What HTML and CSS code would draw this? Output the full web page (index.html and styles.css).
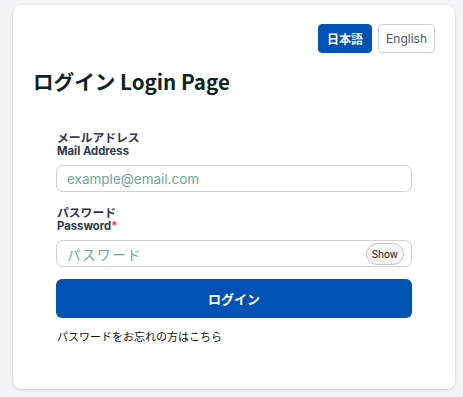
FILE: index.html
```html
<!DOCTYPE html>
<html lang="ja">
<head>
<meta charset="utf-8">
<link rel="stylesheet" href="styles.css">
</head>
<body>
<div class="card">
  <div class="lang">
    <button class="lang-btn active">日本語</button>
    <button class="lang-btn">English</button>
  </div>
  <h1 class="title">ログイン Login Page</h1>
  <form class="form">
    <div class="field">
      <label class="label"><span class="ja">メールアドレス</span><span class="en">Mail Address</span></label>
      <div class="input"><span class="ph">example@email.com</span></div>
    </div>
    <div class="field">
      <label class="label"><span class="ja">パスワード</span><span class="en">Password<span class="req">*</span></span></label>
      <div class="input"><span class="ph ph-pw">パスワード</span><span class="show">Show</span></div>
    </div>
    <button type="button" class="submit">ログイン</button>
    <div class="forgot">パスワードをお忘れの方はこちら</div>
  </form>
</div>
</body>
</html>
```
FILE: styles.css
```css
html, body { margin: 0; padding: 0; }
body {
  background: #f3f4f6;
  font-family: "Inter", "Noto Sans CJK JP", sans-serif;
  padding: 5px 8px 8px 13px;
  box-sizing: border-box;
  height: 397px;
}
.card {
  width: 442px;
  height: 384px;
  box-sizing: border-box;
  background: #fff;
  border-radius: 8px;
  box-shadow: 0 1px 3px rgba(0,0,0,0.12), 0 0 0 1px rgba(0,0,0,0.03);
  padding: 19px 20px 0 20px;
}
.lang {
  display: flex;
  justify-content: flex-end;
  gap: 6px;
}
.lang-btn {
  height: 29px;
  padding: 0 7px;
  border-radius: 4px;
  font-family: "Inter", "Noto Sans CJK JP", sans-serif;
  font-size: 12px;
  border: 1px solid #cbd2dc;
  background: #fff;
  color: #4a5568;
}
.lang-btn.active {
  background: #0052b4;
  border-color: #0052b4;
  color: #fff;
  font-weight: 600;
  padding: 0 8px;
}
.title {
  margin: 13px 0 0 0;
  font-family: "Noto Sans CJK JP", sans-serif;
  font-size: 20.6px;
  font-weight: 700;
  color: #0d2327;
  line-height: 30px;
}
.form {
  margin: 33px 23px 0 23px;
  display: flex;
  flex-direction: column;
}
.field { display: flex; flex-direction: column; margin-bottom: 12px; }
.label {
  display: flex;
  flex-direction: column;
  font-size: 11.3px;
  font-weight: 700;
  color: #2d3748;
  line-height: 15px;
  margin-bottom: 6px;
  padding-left: 1px;
}
.label .ja { font-family: "Noto Sans CJK JP", sans-serif; font-size: 11.8px; }
.req { color: #e53e3e; }
.input {
  height: 27px;
  box-sizing: border-box;
  border: 1px solid #cbd0da;
  border-radius: 7px;
  display: flex;
  align-items: center;
  justify-content: space-between;
  padding: 0 7px 0 10px;
}
.ph {
  font-family: "Inter", "Noto Sans CJK JP", sans-serif;
  font-size: 13.5px;
  color: #6fa59a;
}
.ph-pw {
  font-family: "Noto Sans CJK JP", sans-serif;
  letter-spacing: 1.5px;
  font-size: 13.5px;
}
.show {
  font-size: 10px;
  color: #111;
  background: #f4f4f4;
  border: 1px solid #c9c9c9;
  border-radius: 11px;
  padding: 0 5px;
  height: 22px;
  box-sizing: border-box;
  display: flex;
  align-items: center;
}
.submit {
  margin-top: 0;
  height: 39px;
  border: none;
  border-radius: 6px;
  background: #0052b4;
  color: #fff;
  font-family: "Noto Sans CJK JP", sans-serif;
  font-size: 13px;
  font-weight: 700;
}
.forgot {
  margin-top: 10px;
  font-family: "Noto Sans CJK JP", sans-serif;
  font-size: 11px;
  line-height: 16px;
  color: #111;
  padding-left: 1px;
}
```
